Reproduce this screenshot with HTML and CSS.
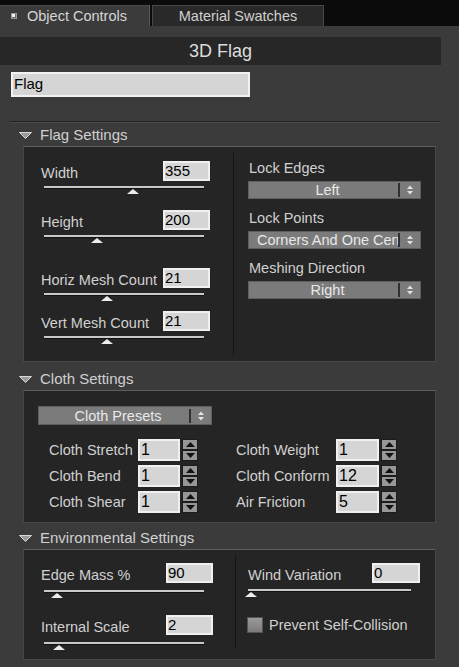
FILE: index.html
```html
<!DOCTYPE html>
<html>
<head>
<meta charset="utf-8">
<link rel="stylesheet" href="styles.css">
</head>
<body>
<div class="tabs">
  <div class="tab tab-active"><span class="tab-icon"><span class="tab-dot"></span></span>Object Controls</div>
  <div class="tab tab-inactive">Material Swatches</div>
</div>
<div class="panel">
  <div class="titlebar">3D Flag</div>
  <div class="name-field">Flag</div>
  <div class="rule"></div>

  <div class="sec-head"><svg class="tri" width="13" height="7" viewBox="0 0 13 7"><polygon points="0.5,0.5 12.5,0.5 6.5,6.5" fill="#9a9a9a" stroke="#d8d8d8" stroke-width="1"/></svg>Flag Settings</div>
  <div class="box flag-box">
    <div class="col-left flag-left">
      <div class="srow"><div class="slabel">Width</div><div class="field">355</div></div>
      <div class="track t5"><span class="thumb" style="left:83px"></span></div>
      <div class="srow g21"><div class="slabel">Height</div><div class="field">200</div></div>
      <div class="track t5"><span class="thumb" style="left:47px"></span></div>
      <div class="srow g30"><div class="slabel">Horiz Mesh Count</div><div class="field">21</div></div>
      <div class="track t5"><span class="thumb" style="left:57px"></span></div>
      <div class="srow g15"><div class="slabel">Vert Mesh Count</div><div class="field">21</div></div>
      <div class="track t5"><span class="thumb" style="left:57px"></span></div>
    </div>
    <div class="col-right flag-right">
      <div class="dd-label first">Lock Edges</div>
      <div class="dd"><div class="dd-text">Left</div><div class="dd-sep"></div><div class="dd-arrows"><svg width="6" height="10" viewBox="0 0 6 10"><polygon points="0,4 3,0.5 6,4" fill="#e2e2e2"/><polygon points="0,6 3,9.5 6,6" fill="#e2e2e2"/></svg></div></div>
      <div class="dd-label">Lock Points</div>
      <div class="dd"><div class="dd-text">Corners And One Center</div><div class="dd-sep"></div><div class="dd-arrows"><svg width="6" height="10" viewBox="0 0 6 10"><polygon points="0,4 3,0.5 6,4" fill="#e2e2e2"/><polygon points="0,6 3,9.5 6,6" fill="#e2e2e2"/></svg></div></div>
      <div class="dd-label">Meshing Direction</div>
      <div class="dd"><div class="dd-text">Right</div><div class="dd-sep"></div><div class="dd-arrows"><svg width="6" height="10" viewBox="0 0 6 10"><polygon points="0,4 3,0.5 6,4" fill="#e2e2e2"/><polygon points="0,6 3,9.5 6,6" fill="#e2e2e2"/></svg></div></div>
    </div>
  </div>

  <div class="sec-head sec-cloth"><svg class="tri" width="13" height="7" viewBox="0 0 13 7"><polygon points="0.5,0.5 12.5,0.5 6.5,6.5" fill="#9a9a9a" stroke="#d8d8d8" stroke-width="1"/></svg>Cloth Settings</div>
  <div class="box cloth-box">
    <div class="dd dd-presets"><div class="dd-text">Cloth Presets</div><div class="dd-sep"></div><div class="dd-arrows"><svg width="6" height="10" viewBox="0 0 6 10"><polygon points="0,4 3,0.5 6,4" fill="#e2e2e2"/><polygon points="0,6 3,9.5 6,6" fill="#e2e2e2"/></svg></div></div>
    <div class="crows">
      <div class="crow">
        <div class="cl">Cloth Stretch</div><div class="cin">1</div>
        <div class="spin"><div class="sbtn"><svg width="9" height="5" viewBox="0 0 9 5"><polygon points="0,5 4.5,0 9,5" fill="#111"/></svg></div><div class="sbtn"><svg width="9" height="5" viewBox="0 0 9 5"><polygon points="0,0 4.5,5 9,0" fill="#111"/></svg></div></div>
        <div class="cl cl2">Cloth Weight</div><div class="cin cin2">1</div>
        <div class="spin"><div class="sbtn"><svg width="9" height="5" viewBox="0 0 9 5"><polygon points="0,5 4.5,0 9,5" fill="#111"/></svg></div><div class="sbtn"><svg width="9" height="5" viewBox="0 0 9 5"><polygon points="0,0 4.5,5 9,0" fill="#111"/></svg></div></div>
      </div>
      <div class="crow">
        <div class="cl">Cloth Bend</div><div class="cin">1</div>
        <div class="spin"><div class="sbtn"><svg width="9" height="5" viewBox="0 0 9 5"><polygon points="0,5 4.5,0 9,5" fill="#111"/></svg></div><div class="sbtn"><svg width="9" height="5" viewBox="0 0 9 5"><polygon points="0,0 4.5,5 9,0" fill="#111"/></svg></div></div>
        <div class="cl cl2">Cloth Conform</div><div class="cin cin2">12</div>
        <div class="spin"><div class="sbtn"><svg width="9" height="5" viewBox="0 0 9 5"><polygon points="0,5 4.5,0 9,5" fill="#111"/></svg></div><div class="sbtn"><svg width="9" height="5" viewBox="0 0 9 5"><polygon points="0,0 4.5,5 9,0" fill="#111"/></svg></div></div>
      </div>
      <div class="crow">
        <div class="cl">Cloth Shear</div><div class="cin">1</div>
        <div class="spin"><div class="sbtn"><svg width="9" height="5" viewBox="0 0 9 5"><polygon points="0,5 4.5,0 9,5" fill="#111"/></svg></div><div class="sbtn"><svg width="9" height="5" viewBox="0 0 9 5"><polygon points="0,0 4.5,5 9,0" fill="#111"/></svg></div></div>
        <div class="cl cl2">Air Friction</div><div class="cin cin2">5</div>
        <div class="spin"><div class="sbtn"><svg width="9" height="5" viewBox="0 0 9 5"><polygon points="0,5 4.5,0 9,5" fill="#111"/></svg></div><div class="sbtn"><svg width="9" height="5" viewBox="0 0 9 5"><polygon points="0,0 4.5,5 9,0" fill="#111"/></svg></div></div>
      </div>
    </div>
  </div>

  <div class="sec-head sec-env"><svg class="tri" width="13" height="7" viewBox="0 0 13 7"><polygon points="0.5,0.5 12.5,0.5 6.5,6.5" fill="#9a9a9a" stroke="#d8d8d8" stroke-width="1"/></svg>Environmental Settings</div>
  <div class="box env-box">
    <div class="col-left env-left">
      <div class="srow"><div class="slabel">Edge Mass %</div><div class="field">90</div></div>
      <div class="track t7"><span class="thumb" style="left:7px"></span></div>
      <div class="srow g22"><div class="slabel">Internal Scale</div><div class="field">2</div></div>
      <div class="track t7"><span class="thumb" style="left:9px"></span></div>
    </div>
    <div class="col-right env-right">
      <div class="srow"><div class="slabel">Wind Variation</div><div class="field field-wide">0</div></div>
      <div class="track track-wide t6"><span class="thumb" style="left:-3px"></span></div>
      <div class="check"><span class="cbox"></span><span class="clabel">Prevent Self-Collision</span></div>
    </div>
  </div>
</div>
</body>
</html>
```

FILE: styles.css
```css
body {
  margin: 0;
  width: 459px;
  height: 667px;
  overflow: hidden;
  background: #3b3b3b;
  font-family: "Liberation Sans", Arial, sans-serif;
  color: #d0d0d0;
}

.tabs {
  height: 26px;
  background: #0b0b0b;
  display: flex;
  align-items: flex-end;
}
.tab {
  height: 21px;
  box-sizing: border-box;
  display: flex;
  align-items: center;
  font-size: 14.5px;
  white-space: nowrap;
}
.tab-active {
  width: 150px;
  background: #3b3b3b;
  padding-left: 11px;
  border-top: 1px solid #4a4a4a;
  border-right: 1px solid #5a5a5a;
  color: #d6d6d6;
}
.tab-icon {
  width: 6px;
  height: 6px;
  box-sizing: border-box;
  border: 1px solid #9a9a9a;
  background: #6a6a6a;
  margin-right: 10px;
  display: flex;
}
.tab-dot {
  width: 3px;
  height: 3px;
  background: #f4f4f4;
}
.tab-inactive {
  width: 172px;
  margin-left: 2px;
  background: #292929;
  border: 1px solid #474747;
  border-bottom: none;
  justify-content: center;
  color: #d0d0d0;
}

.panel {
  padding-top: 11px;
}
.titlebar {
  width: 441px;
  height: 28px;
  background: #272727;
  display: flex;
  align-items: center;
  justify-content: center;
  font-size: 18px;
  color: #dcdcdc;
}
.name-field {
  margin: 7px 0 0 11px;
  width: 239px;
  height: 25px;
  box-sizing: border-box;
  background: #d5d5d5;
  border: 2px solid #f2f2f2;
  color: #000;
  font-size: 15px;
  line-height: 20px;
  padding-left: 1px;
}
.rule {
  margin: 24px 0 0 10px;
  width: 431px;
  height: 1px;
  background: #222;
  border-bottom: 1px solid #4b4b4b;
}

.sec-head {
  height: 23px;
  display: flex;
  align-items: center;
  padding-left: 19px;
  font-size: 15px;
  color: #d0d0d0;
}
.sec-cloth { margin-top: 5px; }
.sec-env { margin-top: 3px; }
.tri {
  margin-right: 8px;
  margin-top: 1px;
}

.box {
  margin-left: 23px;
  width: 413px;
  box-sizing: border-box;
  background: #252525;
  border: 1px solid #474747;
  border-top-color: #5e5e5e;
  display: flex;
}
.flag-box { height: 216px; }
.cloth-box {
  height: 133px;
  display: block;
  padding: 15px 0 0 14px;
}
.env-box { height: 111px; }

.col-left {
  width: 212px;
  box-sizing: border-box;
  padding: 14px 23px 0 17px;
}
.env-left {
  width: 211px;
  padding: 13px 22px 0 17px;
}
.col-right {
  flex: 1;
  border-left: 1px solid #141414;
  margin: 6px 0 6px 0;
  padding: 7px 14px 0 14px;
}
.env-right {
  margin-bottom: 11px;
  padding: 7px 15px 0 12px;
}

.srow {
  display: flex;
  align-items: flex-end;
  height: 20px;
}
.g15 { margin-top: 15px; }
.g21 { margin-top: 21px; }
.g22 { margin-top: 22px; }
.g30 { margin-top: 30px; }
.slabel {
  flex: 1;
  line-height: 16px;
  font-size: 14.5px;
  white-space: nowrap;
}
.field {
  width: 47px;
  height: 20px;
  box-sizing: border-box;
  background: #d5d5d5;
  border: 2px solid #f0f0f0;
  color: #000;
  font-size: 15px;
  line-height: 16px;
}
.field-wide { width: 48px; }

.track {
  position: relative;
  margin-left: 3px;
  width: 160px;
  height: 2px;
  background: #c9c9c9;
  border-bottom: 1px solid #111;
}
.track-wide {
  margin-left: 0;
  width: 163px;
}
.t5 { margin-top: 5px; }
.t6 { margin-top: 6px; }
.t7 { margin-top: 7px; }
.thumb {
  position: absolute;
  top: 3px;
  width: 0;
  height: 0;
  border-left: 6px solid transparent;
  border-right: 6px solid transparent;
  border-bottom: 5px solid #ececec;
}

.dd-label {
  margin-top: 11px;
  line-height: 16px;
  padding-left: 1px;
  font-size: 14.5px;
  white-space: nowrap;
}
.dd-label.first { margin-top: 0; }
.dd {
  display: flex;
  align-items: center;
  width: 173px;
  height: 18px;
  box-sizing: border-box;
  background: #7b7b7b;
  border: 1px solid #5e5e5e;
  margin-top: 5px;
  font-size: 14.5px;
  color: #e8e8e8;
}
.dd-presets {
  width: 174px;
  height: 19px;
  margin-top: 0;
}
.dd-text {
  flex: 1;
  overflow: hidden;
  white-space: nowrap;
  text-align: center;
  padding-left: 8px;
  line-height: 16px;
}
.dd-sep {
  width: 2px;
  height: 14px;
  background: #303030;
}
.dd-arrows {
  width: 20px;
  display: flex;
  justify-content: center;
  align-items: center;
}

.crows {
  margin: 14px 0 0 11px;
  display: flex;
  flex-direction: column;
  gap: 4px;
}
.crow {
  display: flex;
  align-items: center;
  height: 22px;
}
.cl {
  width: 89px;
  font-size: 14.5px;
  white-space: nowrap;
}
.cl2 {
  margin-left: 38px;
  width: 100px;
}
.cin {
  width: 42px;
  height: 22px;
  box-sizing: border-box;
  background: #d5d5d5;
  border: 2px solid #f0f0f0;
  color: #000;
  font-size: 16px;
  line-height: 18px;
  padding-left: 1px;
}
.cin2 { width: 43px; }
.spin {
  margin-left: 2px;
  width: 16px;
  height: 22px;
  display: flex;
  flex-direction: column;
  justify-content: space-between;
}
.sbtn {
  height: 11px;
  box-sizing: border-box;
  background: #979797;
  border: 1px solid #1c1c1c;
  display: flex;
  align-items: center;
  justify-content: center;
}

.check {
  margin-top: 25px;
  margin-left: -1px;
  display: flex;
  align-items: center;
}
.cbox {
  width: 16px;
  height: 16px;
  box-sizing: border-box;
  background: linear-gradient(#9a9a9a, #7c7c7c);
  border: 1px solid #555;
}
.clabel {
  margin-left: 6px;
  font-size: 14.5px;
  white-space: nowrap;
}
```
